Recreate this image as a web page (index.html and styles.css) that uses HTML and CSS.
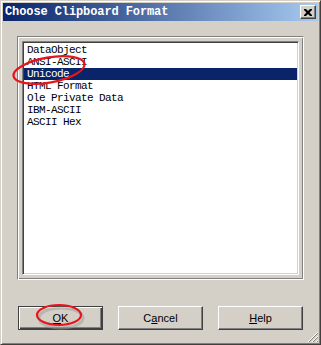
FILE: index.html
```html
<!DOCTYPE html>
<html lang="en">
<head>
  <meta charset="UTF-8" />
  <title>Choose Clipboard Format</title>
  <link rel="stylesheet" href="styles.css">
</head>
<body>

<div class="window">
  <div class="titlebar">
    <span class="title">Choose Clipboard Format</span>
    <button class="close">
      <svg width="8" height="7" viewBox="0 0 8 7">
        <path d="M0 0h2l2 2 2-2h2v1l-2.5 2.5 2.5 2.5v1h-2l-2-2-2 2h-2v-1l2.5-2.5-2.5-2.5z" fill="#000"/>
      </svg>
    </button>
  </div>

  <div class="client">
    <div class="frame">
      <ul class="list">
        <li>DataObject</li>
        <li>ANSI-ASCII</li>
        <li class="selected">Unicode</li>
        <li>HTML Format</li>
        <li>Ole Private Data</li>
        <li>IBM-ASCII</li>
        <li>ASCII Hex</li>
      </ul>
    </div>

    <div class="buttons">
      <button class="btn default"><u>O</u>K</button>
      <button class="btn">C<u>a</u>ncel</button>
      <button class="btn"><u>H</u>elp</button>
    </div>
  </div>

  <!-- size grip -->
  <svg class="grip" width="12" height="12" viewBox="0 0 12 12">
    <path d="M11 1L1 11M11 5L5 11M11 9L9 11" stroke="#fff" stroke-width="1"/>
    <path d="M11 2L2 11M11 6L6 11M11 10L10 11" stroke="#808080" stroke-width="1"/>
  </svg>

  <!-- red annotation marks -->
  <svg class="marks" width="321" height="345" viewBox="0 0 321 345">
    <ellipse cx="61" cy="318" rx="22" ry="10" fill="none" stroke="#9a9a9a" stroke-width="3" opacity="0.5"/>
    <ellipse cx="49" cy="70" rx="36" ry="12.5" transform="rotate(-10 49 70)" fill="none" stroke="#e8141b" stroke-width="2.2"/>
    <ellipse cx="59" cy="315" rx="22" ry="10" fill="none" stroke="#e8141b" stroke-width="2.2"/>
  </svg>
</div>

</body>
</html>
```

FILE: styles.css
```css
body {
  margin: 0;
  background: #d4d0c8;
}
.window {
  position: relative;
  width: 321px;
  height: 345px;
  box-sizing: border-box;
  background: #d4d0c8;
  border: 1px solid;
  border-color: #d4d0c8 #404040 #404040 #d4d0c8;
  box-shadow: inset 1px 1px #fff, inset -1px -1px #808080;
  padding: 2px;
  display: flex;
  flex-direction: column;
}
.titlebar {
  height: 18px;
  display: flex;
  align-items: center;
  justify-content: space-between;
  padding: 0 2px;
  background: linear-gradient(to right, #0a246a, #a6caf0);
}
.title {
  font: bold 12px "Liberation Mono", monospace;
  letter-spacing: -0.1px;
  color: #fff;
}
.close {
  width: 16px;
  height: 14px;
  padding: 0;
  box-sizing: border-box;
  border: 1px solid;
  border-color: #fff #404040 #404040 #fff;
  box-shadow: inset -1px -1px #808080;
  background: #d4d0c8;
  display: flex;
  align-items: center;
  justify-content: center;
}
.client {
  flex: 1;
  padding: 15px 14px 0;
}
.frame {
  height: 244px;
  box-sizing: border-box;
  border: 1px solid;
  border-color: #808080 #fff #fff #808080;
  box-shadow: inset 1px 1px #fff, inset -1px -1px #808080;
  padding: 4px;
}
.list {
  margin: 0;
  padding: 2px 1px;
  list-style: none;
  height: 100%;
  box-sizing: border-box;
  background: #fff;
  border: 1px solid;
  border-color: #808080 #fff #fff #808080;
  box-shadow: inset 1px 1px #404040, inset -1px -1px #d4d0c8;
}
.list li {
  height: 12px;
  line-height: 13px;
  padding-left: 3px;
  font: 11px "Liberation Mono", monospace;
  letter-spacing: -0.6px;
  white-space: nowrap;
  color: #000;
}
.list li.selected {
  background: #0a246a;
  color: #fff;
}
.buttons {
  margin-top: 26px;
  padding: 0 1px;
  display: flex;
  justify-content: space-between;
}
.btn {
  width: 85px;
  height: 24px;
  padding: 0;
  box-sizing: border-box;
  background: #d4d0c8;
  border: 1px solid;
  border-color: #fff #404040 #404040 #fff;
  box-shadow: inset -1px -1px #808080;
  font: 11px "Liberation Sans", Arial, sans-serif;
  color: #000;
}
.btn.default {
  border-color: #404040;
  box-shadow: inset 1px 1px #fff, inset -1px -1px #404040, inset -2px -2px #808080;
}
.grip {
  position: absolute;
  right: 1px;
  bottom: 1px;
}
.marks {
  position: absolute;
  left: -1px;
  top: -1px;
  pointer-events: none;
}
```
